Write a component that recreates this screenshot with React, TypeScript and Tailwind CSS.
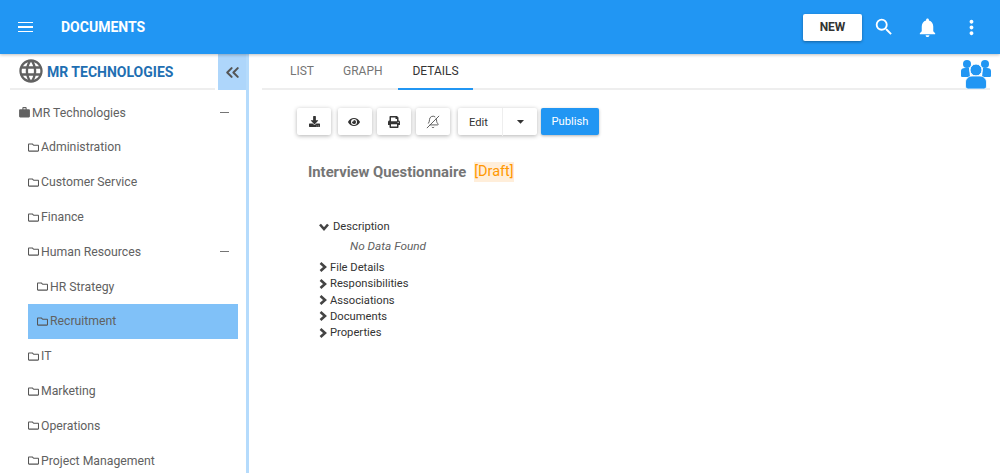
import React from 'react';
import { FaDownload, FaEye, FaPrint, FaRegFolder } from 'react-icons/fa';
import { MdArrowDropDown, MdLanguage, MdMoreVert, MdNotifications, MdSearch, MdWork } from 'react-icons/md';
import { BellOff, ChevronsLeft } from 'lucide-react';

const Chevron = ({ down }: { down?: boolean }) => (
  <svg viewBox="0 0 10 10" className={`w-[10px] h-[10px] shrink-0 text-[#444] ${down ? 'rotate-90' : '-translate-y-px'}`} fill="none" stroke="currentColor" strokeWidth="2.6">
    <path d="M2.5 1 L7 5 L2.5 9" />
  </svg>
);

const TreeRow = ({ label, indent, expanded, selected, root }: { label: string; indent: string; expanded?: boolean; selected?: boolean; root?: boolean }) => (
  <div className={`h-[34.8px] flex items-center text-[12.25px] text-[#616161] ${indent} ${selected ? 'bg-[#80c1f8] w-[210px]' : 'w-[238px]'}`}>
    {root ? <MdWork className="text-[13px] mr-[1px] ml-[-1px] text-[#616161]" /> : <FaRegFolder className="text-[11px] mr-[2px] text-[#555]" />}
    <span>{label}</span>
    {expanded && <span className="ml-auto mr-[9px] w-[9px] h-px bg-[#757575]" />}
  </div>
);

const ToolButton = ({ children, className }: { children: React.ReactNode; className: string }) => (
  <button className={`h-[27px] flex items-center justify-center bg-white rounded-[2px] shadow-[0_1px_4px_rgba(0,0,0,0.3)] text-[11.2px] text-[#333] ${className}`}>
    {children}
  </button>
);

const Section = ({ label }: { label: string }) => (
  <div className="h-[16.3px] flex items-center text-[11.2px] text-[#333]">
    <span className="ml-[-1px]"><Chevron /></span>
    <span className="ml-[2px]">{label}</span>
  </div>
);

const PeopleIcon = () => (
  <svg viewBox="0 0 30 29" className="absolute right-[-1px] top-[6px] w-[30px] h-[29px] text-[#2196f3]" fill="currentColor">
    <circle cx="6" cy="4" r="4" />
    <circle cx="24" cy="4" r="4" />
    <path d="M0 11 C0 9 1.5 8 4 8 L8 8 L9 17 L1 17 C0 17 0 16 0 15 Z" />
    <path d="M30 11 C30 9 28.5 8 26 8 L22 8 L21 17 L29 17 C30 17 30 16 30 15 Z" />
    <circle cx="15" cy="10" r="6" stroke="#ffffff" strokeWidth="1" />
    <path d="M4.5 22 C4.5 19 7.5 16 11 16 L19 16 C22.5 16 25.5 19 25.5 22 L25.5 26 C25.5 28 24.5 29 22.5 29 L7.5 29 C5.5 29 4.5 28 4.5 26 Z" stroke="#ffffff" strokeWidth="0.8" />
  </svg>
);

export default function App() {
  return (
    <div className="w-[1000px] h-[473px] overflow-hidden bg-white font-['Roboto',sans-serif] flex flex-col">
      <header className="relative z-10 h-[54px] shrink-0 bg-[#2196f3] shadow-[0_1px_3px_rgba(0,0,0,0.25)] flex items-center text-white">
        <div className="ml-[18px] w-[15px] flex flex-col gap-[3px]">
          <span className="h-[1.5px] bg-white" />
          <span className="h-[1.5px] bg-white" />
          <span className="h-[1.5px] bg-white" />
        </div>
        <h1 className="ml-[28px] text-[14px] font-bold">DOCUMENTS</h1>
        <button className="ml-auto w-[59px] h-[27px] bg-white rounded-[2px] shadow-[0_1px_3px_rgba(0,0,0,0.35)] text-[12px] font-bold text-[#333]">NEW</button>
        <MdSearch className="text-[22px] ml-[11px]" />
        <MdNotifications className="text-[23px] ml-[21px]" />
        <MdMoreVert className="text-[23px] ml-[21px] mr-[17px]" />
      </header>

      <div className="flex flex-1 min-h-0">
        <aside className="w-[249px] shrink-0 border-r-[3px] border-[#b5dbfc] overflow-hidden">
          <div className="flex h-[37px]">
            <div className="ml-[10px] w-[205px] h-[36px] border-b-2 border-[#eeeeee] flex items-center pl-[8px] pt-[3px]">
              <MdLanguage className="text-[28px] text-[#616161] mt-[-3px] ml-[-1px]" />
              <span className="ml-[2px] text-[14px] font-bold text-[#1f6fb2]">MR TECHNOLOGIES</span>
            </div>
            <div className="ml-[3px] w-[28px] h-[36px] bg-[#aed6fb] flex items-center justify-center">
              <ChevronsLeft size={21} strokeWidth={2.4} className="text-[#555]" />
            </div>
          </div>
          <div className="mt-[4.4px]">
            <TreeRow root expanded label="MR Technologies" indent="pl-[19px]" />
            <TreeRow label="Administration" indent="pl-[28px]" />
            <TreeRow label="Customer Service" indent="pl-[28px]" />
            <TreeRow label="Finance" indent="pl-[28px]" />
            <TreeRow expanded label="Human Resources" indent="pl-[28px]" />
            <TreeRow label="HR Strategy" indent="pl-[37px]" />
            <div className="pl-[28px]">
              <TreeRow selected label="Recruitment" indent="pl-[9px]" />
            </div>
            <TreeRow label="IT" indent="pl-[28px]" />
            <TreeRow label="Marketing" indent="pl-[28px]" />
            <TreeRow label="Operations" indent="pl-[28px]" />
            <TreeRow label="Project Management" indent="pl-[28px]" />
          </div>
        </aside>

        <main className="flex-1 min-w-0 pl-[13px]">
          <div className="relative w-[728px] h-[36px] border-b-2 border-[#eeeeee] flex text-[12px]">
            <span className="w-[53px] ml-[28px] leading-[35px] text-[#757575]">LIST</span>
            <span className="w-[55px] leading-[35px] text-[#757575]">GRAPH</span>
            <span className="w-[75px] h-[36px] leading-[35px] text-center text-[#333] border-b-2 border-[#2196f3]">DETAILS</span>
            <PeopleIcon />
          </div>

          <div className="flex items-center mt-[18px] ml-[35px]">
            <ToolButton className="w-[34px]"><FaDownload className="text-[11px]" /></ToolButton>
            <ToolButton className="w-[34px] ml-[7px] pr-[2px]"><FaEye className="text-[12px]" /></ToolButton>
            <ToolButton className="w-[34px] ml-[5px]"><FaPrint className="text-[12px]" /></ToolButton>
            <ToolButton className="w-[34px] ml-[5px]"><BellOff size={14} strokeWidth={1.6} className="text-[#555] -scale-x-100" /></ToolButton>
            <ToolButton className="w-[79px] ml-[8px] justify-start">
              <span className="w-[45px] pr-[3px] pt-px text-center border-r border-[#eeeeee] leading-[27px]">Edit</span>
              <MdArrowDropDown className="text-[17px] ml-[9px]" />
            </ToolButton>
            <button className="w-[58px] h-[27px] ml-[4px] pt-px bg-[#2196f3] rounded-[2px] shadow-[0_1px_3px_rgba(0,0,0,0.3)] text-[11.2px] text-white">Publish</button>
          </div>

          <div className="flex items-center h-[20px] mt-[27px] ml-[46px]">
            <span className="text-[14.8px] font-bold text-[#757575]">Interview Questionnaire</span>
            <span className="ml-[8px] text-[14.5px] leading-[20px] text-[#ff9800] bg-[#ffeeda]">[Draft]</span>
          </div>

          <div className="mt-[37px] ml-[57px]">
            <div className="h-[16px] flex items-center text-[11.2px] text-[#333]">
              <Chevron down />
              <span className="ml-[4px]">Description</span>
            </div>
            <div className="h-[24px] pl-[31px] flex items-center text-[11.8px] italic text-[#616161]">No Data Found</div>
            <div className="mt-[1.2px]">
              <Section label="File Details" />
              <Section label="Responsibilities" />
              <Section label="Associations" />
              <Section label="Documents" />
              <Section label="Properties" />
            </div>
          </div>
        </main>
      </div>
    </div>
  );
}
